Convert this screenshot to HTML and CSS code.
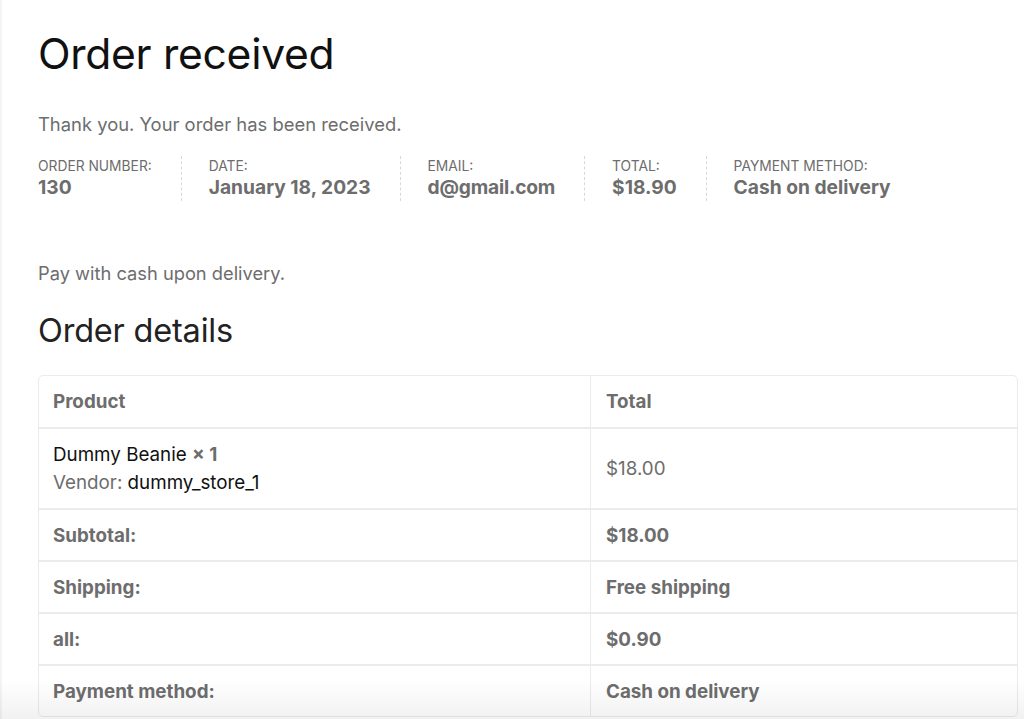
FILE: index.html
```html
<!DOCTYPE html>
<html>
<head>
<meta charset="utf-8">
<link rel="stylesheet" href="styles.css">
</head>
<body>
<div class="page">
  <h1 class="title">Order received</h1>
  <p class="thanks">Thank you. Your order has been received.</p>
  <ul class="overview">
    <li class="ov-item"><span class="ov-label">Order number:</span><strong class="ov-value">130</strong></li>
    <li class="ov-item"><span class="ov-label">Date:</span><strong class="ov-value">January 18, 2023</strong></li>
    <li class="ov-item"><span class="ov-label">Email:</span><strong class="ov-value tight">d@gmail.com</strong></li>
    <li class="ov-item"><span class="ov-label">Total:</span><strong class="ov-value">$18.90</strong></li>
    <li class="ov-item last"><span class="ov-label">Payment method:</span><strong class="ov-value">Cash on delivery</strong></li>
  </ul>
  <p class="pay">Pay with cash upon delivery.</p>
  <h2 class="subtitle">Order details</h2>
  <table class="details">
    <thead>
      <tr><th class="c1">Product</th><th class="c2">Total</th></tr>
    </thead>
    <tbody>
      <tr class="prod">
        <td class="c1"><div class="pname">Dummy Beanie <strong class="qty">× 1</strong></div><div class="vendor">Vendor: <span class="vname">dummy_store_1</span></div></td>
        <td class="c2 price">$18.00</td>
      </tr>
    </tbody>
    <tfoot>
      <tr><th class="c1">Subtotal:</th><td class="c2">$18.00</td></tr>
      <tr><th class="c1">Shipping:</th><td class="c2">Free shipping</td></tr>
      <tr><th class="c1">all:</th><td class="c2">$0.90</td></tr>
      <tr><th class="c1">Payment method:</th><td class="c2">Cash on delivery</td></tr>
    </tfoot>
  </table>
</div>
<div class="fade"></div>
</body>
</html>
```
FILE: styles.css
```css
html, body {
  margin: 0;
  padding: 0;
  background: #fff;
}
body {
  font-family: Inter, "Liberation Sans", Arial, sans-serif;
  color: #6d6d6d;
  width: 1024px;
  height: 719px;
  overflow: hidden;
  position: relative;
}
.page {
  box-sizing: border-box;
  height: 719px;
  padding: 26px 6px 0 36px;
  border-left: 2px solid #f4f4f4;
}
.title {
  margin: 0;
  font-size: 42.6px;
  font-weight: 400;
  color: #111;
  line-height: 56px;
  letter-spacing: -0.3px;
}
.thanks {
  margin: 30px 0 0;
  font-size: 18.4px;
  line-height: 24px;
}
.overview {
  list-style: none;
  margin: 20px 0 0;
  padding: 0;
  display: flex;
}
.ov-item {
  display: flex;
  flex-direction: column;
  padding-right: 29px;
  margin-right: 27px;
  border-right: 1px dashed #d8d8d8;
  padding-top: 1px;
  height: 44px;
}
.ov-item.last {
  border-right: none;
}
.ov-label {
  text-transform: uppercase;
  font-size: 13.8px;
  line-height: 15px;
  padding-top: 2px;
}
.ov-value {
  font-size: 19.2px;
  font-weight: 700;
  line-height: 25px;
  margin-top: 1px;
}
.ov-value.tight {
  letter-spacing: -0.2px;
}
.pay {
  margin: 60px 0 0;
  font-size: 18.3px;
  line-height: 24px;
}
.subtitle {
  margin: 24px 0 0;
  font-size: 32.5px;
  font-weight: 400;
  color: #222;
  line-height: 44px;
  letter-spacing: -0.2px;
}
.details {
  margin-top: 22px;
  width: 980px;
  border-collapse: separate;
  border-spacing: 0;
  border: 1px solid #ebebeb;
  border-radius: 5px;
  font-size: 18.8px;
}
.details th, .details td {
  text-align: left;
  padding: 0 14px;
  height: 50px;
  border-top: 2px solid #ebebeb;
  vertical-align: middle;
  font-weight: 700;
}
.details thead th {
  border-top: none;
  height: 51px;
}
.details .c1 {
  width: 523px;
  border-right: 1px solid #ebebeb;
}
.details .c2 {
  padding-left: 15px;
}
.details tbody td {
  height: 79px;
  font-weight: 400;
}
.pname {
  color: #111;
  line-height: 28px;
}
.qty {
  color: #6d6d6d;
}
.vendor {
  line-height: 28px;
}
.vname {
  color: #111;
}
.fade {
  position: absolute;
  left: 0;
  right: 0;
  bottom: 0;
  height: 40px;
  background: linear-gradient(to bottom, rgba(0,0,0,0), rgba(0,0,0,0.055));
  pointer-events: none;
}
```
